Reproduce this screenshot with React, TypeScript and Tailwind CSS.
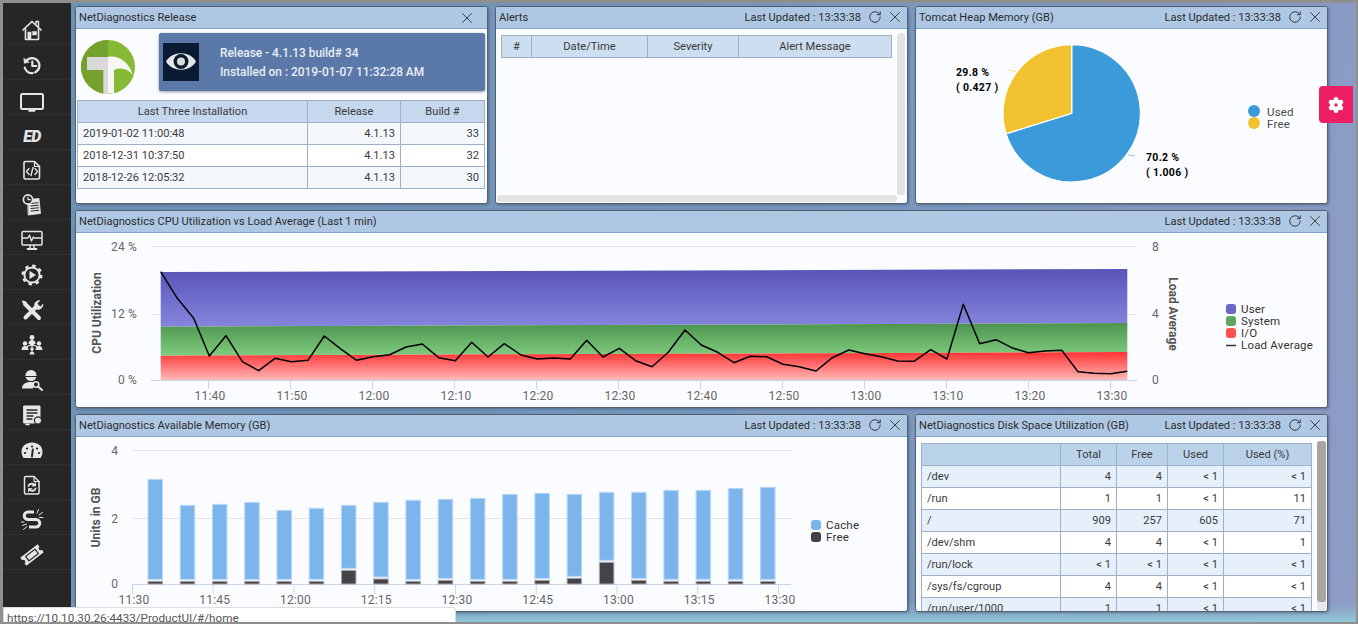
import React from 'react';
import { RotateCw, X, Settings } from 'lucide-react';

const Panel = ({ title, updated = true, children, className = '' }: { title: string; updated?: boolean; children: React.ReactNode; className?: string }) => (
  <section className={`flex h-[198px] flex-col overflow-hidden rounded-[3px] border border-[#55616e] bg-[#fbfcff] shadow-[1px_1px_3px_rgba(40,50,80,0.45)] ${className}`}>
    <header className="flex h-[22px] shrink-0 items-center border-b border-[#7fa3c9] bg-[#aec8e4] pl-[3px] text-[11.1px] text-[#2c2c2c]">
      <span className="pt-[2px]">{title}</span>
      <div className="ml-auto flex items-center">
        {updated && <span className="mr-[7px] pt-[2px]">Last Updated : 13:33:38</span>}
        {updated && <RotateCw size={14} strokeWidth={1.6} className="mr-[4px] text-[#333]" />}
        <X size={18} strokeWidth={1.2} className={updated ? 'mr-[3px] text-[#333]' : 'mr-[11px] text-[#333]'} />
      </div>
    </header>
    {children}
  </section>
);

const cell = 'h-[22px] border border-[#9fb0c6] p-0 px-[5px] text-[11.1px] font-normal leading-none text-[#3a3a3a]';

const Icon = ({ children }: { children: React.ReactNode }) => (
  <svg width="24" height="24" viewBox="0 0 24 24" fill="none" stroke="currentColor" strokeLinecap="round" strokeLinejoin="round">
    {children}
  </svg>
);

const sidebarIcons: React.ReactNode[] = [
  <Icon key="home">
    <path d="M3 12 12 3.5 21 12" strokeWidth="1.7" />
    <path d="M16 6V3.5h2.5V8.5" strokeWidth="1.4" />
    <path d="M5.5 11v10.5h13V11" strokeWidth="1.6" />
    <rect x="8" y="14" width="3" height="7" fill="currentColor" strokeWidth="0.5" />
    <rect x="12.5" y="13.5" width="4" height="3.5" fill="currentColor" strokeWidth="0.5" />
  </Icon>,
  <Icon key="history">
    <path d="M6 8A7.500 7.500 0 1 1 4.700 14.500" strokeWidth="2.200" strokeDasharray="27 2.500" />
    <path d="M3.800 5.500 4.300 10.300l4.700-1z" fill="currentColor" strokeWidth="0.6" />
    <path d="M12.300 8.500V13h4" strokeWidth="2.200" />
  </Icon>,
  <Icon key="monitor">
    <rect x="1" y="6" width="22" height="15" rx="1.5" strokeWidth="2" />
    <rect x="9" y="21.5" width="6" height="2" fill="currentColor" strokeWidth="0.5" />
  </Icon>,
  <span key="ed" className="mt-[3px] text-[16px] font-black italic leading-none tracking-[-0.5px]">ED</span>,
  <Icon key="code">
    <path d="M5.5 3.5h9l5 5v11a1.5 1.5 0 0 1-1.5 1.5H5.500A1.500 1.500 0 0 1 4 19.500V5a1.500 1.500 0 0 1 1.500-1.500z" strokeWidth="1.6" />
    <path d="M14.5 3.5v5h5" strokeWidth="1.2" />
    <path d="M9 10.5l-2.5 3 2.5 3M15 10.5l2.5 3-2.5 3M13 9.5l-2 8" strokeWidth="1.4" />
  </Icon>,
  <Icon key="doc-clock">
    <path d="M8 6.5l11-1 1.5 15-12 1.5z" fill="currentColor" strokeWidth="0.8" />
    <path d="M10.5 10.5l7.5-.7M10.7 13l7.5-.7M11 15.5l7.5-.7M11.2 18l7.5-.7" stroke="#262626" strokeWidth="1" />
    <circle cx="8" cy="6.5" r="4.6" fill="#262626" strokeWidth="1.7" />
    <path d="M8 4.2v2.5h2.2" strokeWidth="1.2" />
  </Icon>,
  <Icon key="monitor-pulse">
    <rect x="2" y="3.5" width="20" height="13.5" rx="1" strokeWidth="1.5" />
    <path d="M3 10h5l1.5-3 2 6 1.8-4 1 1H21" strokeWidth="1.3" />
    <path d="M10 17.5v2.5M14 17.5v2.5" strokeWidth="1.5" />
    <path d="M7.5 21h9" strokeWidth="1.8" />
  </Icon>,
  <Icon key="gear-play">
    <circle cx="12" cy="12" r="7.6" strokeWidth="2" />
    <circle cx="12" cy="12" r="9.3" strokeWidth="2.4" strokeDasharray="3.4 3.9" strokeLinecap="butt" />
    <path d="M10 8.5l5.5 3.5-5.5 3.5z" fill="currentColor" strokeWidth="0.6" />
  </Icon>,
  <Icon key="tools">
    <path d="M5 6l14 14" strokeWidth="4" />
    <path d="M3 3l3 1 1 3-2 0-2-2z" fill="currentColor" strokeWidth="1" />
    <path d="M5.5 19.5 16.5 8.5" strokeWidth="4" />
    <path d="M15 9c-1.5-3 .5-6.5 5-6.5l-2.8 2.8 1.3 2.2 2.2 1.3L23 6c0 4.5-4 6.5-7 5z" fill="currentColor" strokeWidth="0.6" />
  </Icon>,
  <Icon key="network">
    <path d="M12 8v6M12 11 5 15M12 11l7 4M12 14v4" strokeWidth="1.2" />
    <circle cx="12" cy="4.5" r="2.4" fill="currentColor" strokeWidth="0" />
    <path d="M8.500 11c0-2.500 1.500-4 3.500-4s3.500 1.500 3.500 4z" fill="currentColor" strokeWidth="0" />
    <circle cx="5" cy="10.500" r="2.200" fill="currentColor" strokeWidth="0" />
    <path d="M1.500 17c0-2.500 1.500-4 3.500-4s3.500 1.500 3.500 4z" fill="currentColor" strokeWidth="0" />
    <circle cx="19" cy="10.500" r="2.200" fill="currentColor" strokeWidth="0" />
    <path d="M15.500 17c0-2.500 1.500-4 3.500-4s3.500 1.500 3.500 4z" fill="currentColor" strokeWidth="0" />
    <circle cx="12" cy="16" r="1.800" fill="currentColor" strokeWidth="0" />
    <path d="M9.500 21.500c0-2 1-3 2.500-3s2.500 1 2.500 3z" fill="currentColor" strokeWidth="0" />
  </Icon>,
  <Icon key="user-search">
    <circle cx="11" cy="7.500" r="5.500" fill="currentColor" strokeWidth="0" />
    <path d="M5 8.500h12" stroke="#262626" strokeWidth="1.200" />
    <path d="M2 20.500c0-4 3-6.500 9-6.500 1 0 2 .1 3 .3l-1 6.200z" fill="currentColor" strokeWidth="0" />
    <circle cx="16" cy="16.500" r="2.800" fill="#262626" strokeWidth="1.500" />
    <path d="M18 18.500l4 3.500" strokeWidth="2" />
  </Icon>,
  <Icon key="report">
    <path d="M4 3h16v17H4z" fill="currentColor" strokeWidth="1" />
    <path d="M7 7h10M7 10h10M7 13h6M7 16h5" stroke="#262626" strokeWidth="1.300" />
    <path d="M6 21.500h3" strokeWidth="1.600" />
    <circle cx="18" cy="17.500" r="3.600" fill="currentColor" stroke="#262626" strokeWidth="1.200" />
  </Icon>,
  <Icon key="gauge">
    <path d="M3.500 20a10 10 0 0 1-2-6C1.500 8 6 4.500 12 4.500S22.500 8 22.500 14a10 10 0 0 1-2 6z" fill="currentColor" strokeWidth="0" />
    <path d="M12 18.500l.8-7" stroke="#262626" strokeWidth="2" />
    <path d="M5 15h.1M7 10.500h.1M12 8.500h.1M17 10.500h.1M19 15h.1" stroke="#262626" strokeWidth="2.200" />
  </Icon>,
  <Icon key="file-sync">
    <path d="M6 3.500h8l5 5v11a1.500 1.500 0 0 1-1.500 1.500H6a1.500 1.500 0 0 1-1.500-1.500V5A1.500 1.500 0 0 1 6 3.500z" strokeWidth="1.500" />
    <path d="M14 3.500v5h5" strokeWidth="1.200" />
    <path d="M8.500 13c.5-2 3-3 5.500-1.500l1 .5M15.500 15.500c-.5 2-3 3-5.500 1.500" strokeWidth="1.800" />
    <path d="M15.500 9.500v3.500H12M8.500 19v-3.500H12" fill="currentColor" strokeWidth="0.800" />
  </Icon>,
  <Icon key="broken-link">
    <path d="M14 4H8a3.700 3.700 0 0 0 0 7.500h8a3.700 3.700 0 0 1 0 7.500H9" strokeWidth="3" strokeLinecap="butt" />
    <path d="M17 5l1.500-3.500M19 7l3.500-2.500M19.500 9.500h3.500M6.500 16l-4 1.500M7 18.500l-3.500 3M1.500 14h2.500" strokeWidth="1" />
  </Icon>,
  <Icon key="ticket">
    <g transform="rotate(-38 12 12)">
      <path d="M1 7h22v3a2 2 0 0 0 0 4v3H1v-3a2 2 0 0 0 0-4z" fill="currentColor" strokeWidth="0" />
      <rect x="6" y="9.200" width="12" height="5.600" stroke="#262626" strokeWidth="1.200" />
    </g>
  </Icon>,
];

const Sidebar = () => (
  <nav className="flex w-[68px] shrink-0 flex-col bg-[#262626] pt-[7px] text-[#e6e6e6]">
    {sidebarIcons.map((icon, i) => (
      <div key={i} className="flex h-[35px] shrink-0 items-center justify-center border-b border-[#2f2f2f] pr-[10px] pt-[6px]">
        {icon}
      </div>
    ))}
  </nav>
);

const ReleasePanel = () => (
  <Panel title="NetDiagnostics Release" updated={false}>
    <div className="flex flex-col pl-[1px] pr-[2px] pt-[4px]">
      <div className="flex">
        <svg width="54" height="54" viewBox="0 0 54 54" className="ml-[4px] mt-[7px] shrink-0">
          <circle cx="27" cy="27" r="27" fill="#86b934" />
          <path d="M27 0a27 27 0 0 0 0 54z" fill="#74a12d" />
          <path d="M6 17h21v13H6z" fill="#d9d9d9" />
          <path d="M22.300 30H27v24h-4.700z" fill="#d9d9d9" />
          <path d="M27 16.700C38 15 48 22 52 35c-5-6-11-8-19-5v23.500h-6z" fill="#f6f6f6" />
        </svg>
        <div className="ml-[24px] flex h-[58px] w-[326px] items-center rounded-[2px] bg-[#5a78a8] pl-[4px] shadow-[0_1px_3px_rgba(0,0,0,0.4)]">
          <svg width="36" height="38" viewBox="0 0 36 38" className="shrink-0 bg-[#0a1a33]">
            <path d="M3 18.500C9 7.500 27 7.500 33 18.500 27 29.500 9 29.500 3 18.500z" fill="#e6e6e6" />
            <circle cx="18" cy="18.500" r="7.500" fill="#0a1a33" />
            <circle cx="18" cy="18.500" r="4" fill="#dcdcdc" />
          </svg>
          <div className="ml-[21px] mt-[2px] text-[11.9px] font-medium leading-[19.500px] text-[#e9eef7]">
            <div>Release - 4.1.13 build# 34</div>
            <div>Installed on : 2019-01-07 11:32:28 AM</div>
          </div>
        </div>
      </div>
      <table className="mt-[6px] w-[408px] table-fixed border-collapse">
        <colgroup>
          <col className="w-[230px]" />
          <col className="w-[93px]" />
          <col />
        </colgroup>
        <thead>
          <tr className="bg-[#c5d8ee]">
            <th className={cell}>Last Three Installation</th>
            <th className={cell}>Release</th>
            <th className={cell}>Build #</th>
          </tr>
        </thead>
        <tbody>
          {[
            ['2019-01-02 11:00:48', '4.1.13', '33'],
            ['2018-12-31 10:37:50', '4.1.13', '32'],
            ['2018-12-26 12:05:32', '4.1.13', '30'],
          ].map((r, i) => (
            <tr key={r[0]} className={i % 2 === 0 ? 'bg-[#f4f8fd]' : 'bg-white'}>
              <td className={cell}>{r[0]}</td>
              <td className={`${cell} text-right`}>{r[1]}</td>
              <td className={`${cell} text-right`}>{r[2]}</td>
            </tr>
          ))}
        </tbody>
      </table>
    </div>
  </Panel>
);

const AlertsPanel = () => (
  <Panel title="Alerts">
    <div className="flex min-h-0 flex-1">
      <div className="flex-1 pl-[5px] pt-[6px]">
        <table className="w-[391px] table-fixed border-collapse">
          <colgroup>
            <col className="w-[30px]" />
            <col className="w-[116px]" />
            <col className="w-[91px]" />
            <col />
          </colgroup>
          <thead>
            <tr className="bg-[#cddef0]">
              <th className={cell}>#</th>
              <th className={cell}>Date/Time</th>
              <th className={cell}>Severity</th>
              <th className={cell}>Alert Message</th>
            </tr>
          </thead>
        </table>
      </div>
      <div className="mr-[2px] mt-[4px] w-[8px] rounded-[3px] bg-[#e3e3e3]" />
    </div>
    <div className="mb-[1px] ml-[1px] h-[7px] w-[400px] rounded-[3px] bg-[#e3e3e3]" />
  </Panel>
);

const HeapPanel = () => (
  <Panel title="Tomcat Heap Memory (GB)">
    <svg viewBox="916 29 411 174" className="h-[174px] w-[411px]">
      <path d="M1071.700 113.300V44.600A68.700 68.700 0 1 1 1006.100 133.700Z" fill="#3b9ada" stroke="#fff" strokeWidth="1.200" />
      <path d="M1071.700 113.300L1006.100 133.700A68.700 68.700 0 0 1 1071.700 44.600Z" fill="#f2c230" stroke="#fff" strokeWidth="1.200" />
      <path d="M1128 155q4 .5 7 1" stroke="#8fc4ea" fill="none" />
      <path d="M1009 70.500q4 0 7 1" stroke="#f6dc8c" fill="none" />
      <g className="fill-black text-[10.500px] font-bold tracking-[0.3px]">
        <text x="956" y="76">29.8 %</text>
        <text x="956" y="91">( 0.427 )</text>
        <text x="1146" y="161">70.2 %</text>
        <text x="1146" y="176">( 1.006 )</text>
      </g>
      <circle cx="1254" cy="111" r="6" fill="#3b9ada" />
      <circle cx="1254" cy="123" r="6" fill="#f2c230" />
      <g className="fill-[#4a4a4a] text-[11.500px] tracking-[0.2px]">
        <text x="1267" y="116">Used</text>
        <text x="1267" y="128">Free</text>
      </g>
    </svg>
  </Panel>
);

const loadLine = '160.7,271.7 177.3,298.3 193.7,318.3 209.3,356 226,335.7 242.3,361.7 258.7,370.7 275,358.3 291.3,361.7 308,360.3 324.3,336 340.3,348.7 356.7,360.3 373,356.7 389.7,354.7 406,347 422.3,344 438.7,357.7 455.3,360.7 471.7,342.3 488,357 504.3,343.7 521,355 537.3,359 554,358 570.3,359 586.7,340.3 603,357 619.3,348.3 635.7,360.7 652,366.7 668.3,352.3 685,330 701.3,345 717.7,352.3 734,362.7 750.3,356.3 766.7,356.7 783,364.3 799.3,366.7 816,371 832.3,357.7 848.7,350 865,353.7 881.3,356.7 897.7,361 914,361.3 930.7,349.7 947,359 963.3,304.3 979.7,343.7 996,339.7 1011.7,347.7 1028.3,352.7 1045,351 1061.7,350.3 1078,371.7 1094.3,373.3 1110.7,373.7 1127.3,371.3';

const cpuTicks = ['11:40', '11:50', '12:00', '12:10', '12:20', '12:30', '12:40', '12:50', '13:00', '13:10', '13:20', '13:30'];

const CpuPanel = () => (
  <Panel title="NetDiagnostics CPU Utilization vs Load Average (Last 1 min)" className="col-span-3">
    <svg viewBox="76 233 1251 174" className="h-[174px] w-[1251px]">
      <defs>
        <linearGradient id="userFill" x1="0" y1="0" x2="0" y2="1">
          <stop offset="0" stopColor="#5955b8" />
          <stop offset="1" stopColor="#8585de" />
        </linearGradient>
        <linearGradient id="systemFill" x1="0" y1="0" x2="0" y2="1">
          <stop offset="0" stopColor="#4d934e" />
          <stop offset="1" stopColor="#80cc80" />
        </linearGradient>
        <linearGradient id="ioFill" x1="0" y1="0" x2="0" y2="1">
          <stop offset="0" stopColor="#ff3232" />
          <stop offset="1" stopColor="#ffb8b8" />
        </linearGradient>
      </defs>
      <path d="M151 246.500H1137M151 314.500H1137" stroke="#e6e6e6" />
      <path d="M151 380.500H1137" stroke="#ccd6eb" />
      {cpuTicks.map((t, i) => (
        <g key={t}>
          <path d={`M${208.500 + i * 82} 380v9`} stroke="#ccd6eb" />
          <text x={210 + i * 82} y="400" textAnchor="middle" className="fill-[#666] text-[12px] tracking-[0.2px]">{t}</text>
        </g>
      ))}
      <path d="M160.700 272L1127.300 269V323L160.700 326.700Z" fill="url(#userFill)" />
      <path d="M160.700 326.700L1127.300 323V352L160.700 355.700Z" fill="url(#systemFill)" />
      <path d="M160.700 355.700L1127.300 352V380L160.700 380Z" fill="url(#ioFill)" />
      <polyline points={loadLine} fill="none" stroke="#000" strokeWidth="1.500" strokeLinejoin="round" />
      <g className="fill-[#666] text-[12px] tracking-[0.2px]">
        <text x="137" y="251" textAnchor="end">24 %</text>
        <text x="137" y="318" textAnchor="end">12 %</text>
        <text x="137" y="384" textAnchor="end">0 %</text>
        <text x="1152" y="251">8</text>
        <text x="1152" y="318">4</text>
        <text x="1152" y="384">0</text>
      </g>
      <text transform="translate(101 313) rotate(-90)" textAnchor="middle" className="fill-[#555] text-[12px] font-bold">CPU Utilization</text>
      <text transform="translate(1169 314) rotate(90)" textAnchor="middle" className="fill-[#555] text-[12px] font-bold">Load Average</text>
      <rect x="1226" y="304" width="10" height="10" rx="3" fill="#6a66c8" />
      <rect x="1226" y="316" width="10" height="10" rx="3" fill="#5fa860" />
      <rect x="1226" y="328" width="10" height="10" rx="3" fill="#ff5050" />
      <path d="M1226 345.500h10" stroke="#333" strokeWidth="1.500" />
      <g className="fill-[#333] text-[11.500px] tracking-[0.2px]">
        <text x="1241" y="313">User</text>
        <text x="1241" y="325">System</text>
        <text x="1241" y="337">I/O</text>
        <text x="1241" y="349">Load Average</text>
      </g>
    </svg>
  </Panel>
);

// top of blue, bottom of blue, top of dark, measured in 3x px from y=410
const memoryBars = [
  [208, 508, 514], [286, 508, 514], [283, 508, 514], [277, 508, 514], [301, 508, 514],
  [295, 508, 514], [286, 475, 481], [277, 501, 507], [271, 508, 514], [268, 505, 511],
  [265, 508, 514], [253, 508, 514], [250, 505, 511], [253, 499, 505], [247, 451, 457],
  [247, 505, 511], [241, 508, 514], [241, 508, 514], [235, 508, 514], [232, 508, 514],
];

const memTicks = ['11:30', '11:45', '12:00', '12:15', '12:30', '12:45', '13:00', '13:15', '13:30'];

const MemoryPanel = () => (
  <Panel title="NetDiagnostics Available Memory (GB)" className="col-span-2">
    <svg viewBox="76 437 831 174" className="h-[174px] w-[831px]">
      <path d="M132 450.500H791M132 518.500H791" stroke="#e6e6e6" />
      <path d="M132 584.500H791" stroke="#ccd6eb" />
      {memTicks.map((t, i) => (
        <g key={t}>
          <path d={`M${132.500 + i * 80.750} 584v10`} stroke="#ccd6eb" />
          <text x={134 + i * 80.750} y="604" textAnchor="middle" className="fill-[#666] text-[12px] tracking-[0.2px]">{t}</text>
        </g>
      ))}
      {memoryBars.map(([top, bottom, dark], i) => {
        const x = 148 + i * 32.240;
        const y1 = 410 + top / 3;
        const y2 = 410 + bottom / 3;
        const y3 = 410 + dark / 3;
        return (
          <g key={i}>
            <rect x={x} y={y1} width="14.500" height={y2 - y1} fill="#7cb5ec" stroke="#b9d8f7" />
            <rect x={x} y={y3} width="14.500" height={584 - y3} fill="#434348" stroke="#a9a9b0" />
          </g>
        );
      })}
      <g className="fill-[#666] text-[12px]" textAnchor="end">
        <text x="118" y="455">4</text>
        <text x="118" y="523">2</text>
        <text x="118" y="588">0</text>
      </g>
      <text transform="translate(100 517.500) rotate(-90)" textAnchor="middle" className="fill-[#555] text-[12px] font-bold">Units in GB</text>
      <rect x="811" y="520" width="10" height="10" rx="3" fill="#7cb5ec" />
      <rect x="811" y="532" width="10" height="10" rx="3" fill="#434348" />
      <g className="fill-[#333] text-[11.500px] tracking-[0.2px]">
        <text x="826" y="529">Cache</text>
        <text x="826" y="541">Free</text>
      </g>
    </svg>
  </Panel>
);

const diskRows = [
  ['/dev', '4', '4', '< 1', '< 1'],
  ['/run', '1', '1', '< 1', '11'],
  ['/', '909', '257', '605', '71'],
  ['/dev/shm', '4', '4', '< 1', '1'],
  ['/run/lock', '< 1', '< 1', '< 1', '< 1'],
  ['/sys/fs/cgroup', '4', '4', '< 1', '< 1'],
  ['/run/user/1000', '1', '1', '< 1', '< 1'],
];

const DiskPanel = () => (
  <Panel title="NetDiagnostics Disk Space Utilization (GB)">
    <div className="flex min-h-0 flex-1 overflow-hidden">
      <div className="flex-1 pl-[5px] pt-[6px]">
        <table className="w-[391px] table-fixed border-collapse">
          <colgroup>
            <col className="w-[139px]" />
            <col className="w-[56px]" />
            <col className="w-[51px]" />
            <col className="w-[56px]" />
            <col />
          </colgroup>
          <thead>
            <tr className="bg-[#bad2ea]">
              <th className={cell}></th>
              <th className={cell}>Total</th>
              <th className={cell}>Free</th>
              <th className={cell}>Used</th>
              <th className={cell}>Used (%)</th>
            </tr>
          </thead>
          <tbody>
            {diskRows.map((r, i) => (
              <tr key={r[0]} className={i % 2 === 0 ? 'bg-[#e6f0fa]' : 'bg-white'}>
                <td className={cell}>{r[0]}</td>
                {r.slice(1).map((v, j) => (
                  <td key={j} className={`${cell} text-right`}>{v}</td>
                ))}
              </tr>
            ))}
          </tbody>
        </table>
      </div>
      <div className="mr-[1px] mt-[4px] w-[9px] rounded-[3px] bg-[#e8e8e8]">
        <div className="h-[161px] rounded-[3px] bg-[#a8a4a4]" />
      </div>
    </div>
  </Panel>
);

export default function App() {
  return (
    <div className="relative flex h-[624px] w-[1358px] overflow-hidden border-b-2 border-l-[3px] border-r-2 border-t-[3px] border-[#8f8f8f] font-[Roboto,sans-serif]">
      <Sidebar />
      <main className="flex-1 bg-[linear-gradient(to_top,#8fc6d6_0px,rgba(143,198,214,0)_18px),linear-gradient(100deg,#6b93b6_0%,#7a98bf_60%,#8e9cc6_100%)] pl-[4px] pt-[3px]">
        <div className="grid w-[1253px] grid-cols-[413px_413px_413px] grid-rows-[198px_198px_198px] gap-x-[7px] gap-y-[6px]">
          <ReleasePanel />
          <AlertsPanel />
          <HeapPanel />
          <CpuPanel />
          <MemoryPanel />
          <DiskPanel />
        </div>
      </main>
      <div className="absolute right-[3px] top-[83px] flex h-[37px] w-[34px] items-center justify-center rounded-l-[4px] bg-[#ed1f64]">
        <Settings size={18} fill="#fff" stroke="#fff" strokeWidth={1.5} className="[&_circle]:fill-[#ed1f64]" />
      </div>
      <div className="absolute bottom-0 left-0 h-[15px] w-[453px] overflow-hidden rounded-tr-[4px] border-l border-r border-t border-[#ddd] bg-white pl-[3px] text-[11.700px] leading-[21px] text-[#555]">
        https://10.10.30.26:4433/ProductUI/#/home
      </div>
    </div>
  );
}
